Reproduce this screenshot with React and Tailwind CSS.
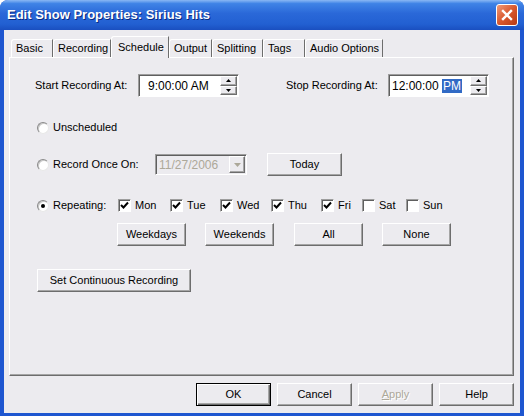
import React from "react";

const raised =
  "border border-t-white border-l-white border-r-[#6d6d6d] border-b-[#6d6d6d] shadow-[inset_-1px_-1px_0_#a5a5a5]";
const sunken =
  "border border-t-[#9d9d9d] border-l-[#9d9d9d] border-r-white border-b-white shadow-[inset_1px_1px_0_#5f5f5f]";

function Btn({ children, className = "", def, disabled }) {
  return (
    <div
      className={`flex items-center justify-center h-[23px] bg-[#ecebef] ${
        def
          ? "border border-black shadow-[inset_1px_1px_0_#fff,inset_-1px_-1px_0_#6d6d6d,inset_-2px_-2px_0_#a5a5a5]"
          : raised
      } ${disabled ? "text-[#aca899] [text-shadow:1px_1px_0_#fff]" : "text-black"} ${className}`}
    >
      {children}
    </div>
  );
}

function Arrow({ up, color = "#000" }) {
  return (
    <svg width="5" height="3" viewBox="0 0 5 3">
      <path d={up ? "M2.5 0L5 3H0z" : "M0 0H5L2.5 3z"} fill={color} />
    </svg>
  );
}

function TimeBox({ pad, children }) {
  return (
    <div className={`flex items-center h-[23px] w-[101px] bg-white ${sunken}`}>
      <div className={`${pad} text-[12px] leading-none`}>{children}</div>
      <div className="ml-auto flex flex-col h-full py-[1px] pr-[1px]">
        <div className={`flex-1 w-[17px] flex items-center justify-center bg-[#ecebef] ${raised}`}>
          <Arrow up />
        </div>
        <div className={`flex-1 w-[17px] flex items-center justify-center bg-[#ecebef] ${raised}`}>
          <Arrow />
        </div>
      </div>
    </div>
  );
}

function Radio({ checked }) {
  return (
    <div className="w-[12px] h-[12px] rounded-full bg-white border border-t-[#8a8a8a] border-l-[#8a8a8a] border-r-[#e8e8e8] border-b-[#e8e8e8] shadow-[inset_1px_1px_0_#c8c8c8] flex items-center justify-center shrink-0">
      {checked && <div className="w-[4px] h-[4px] rounded-full bg-black" />}
    </div>
  );
}

function Check({ label, checked, w }) {
  return (
    <div className={`flex items-center gap-[4px] ${w}`}>
      <div className={`w-[13px] h-[13px] bg-white flex items-center justify-center shrink-0 ${sunken}`}>
        {checked && (
          <svg width="9" height="9" viewBox="0 0 9 9">
            <path d="M1 4L3.5 6.5L8 1.5" stroke="#000" strokeWidth="2" fill="none" />
          </svg>
        )}
      </div>
      <span>{label}</span>
    </div>
  );
}

const tabs = [
  ["Basic", "w-[42px]"],
  ["Recording", "w-[58px]"],
  ["Schedule", "w-[58px]", true],
  ["Output", "w-[43px]"],
  ["Splitting", "w-[51px]"],
  ["Tags", "w-[42px]"],
  ["Audio Options", "w-[78px]"],
];

export default function App() {
  return (
    <div className="w-[524px] h-[416px] flex flex-col bg-[#1e56d0] rounded-t-[8px] overflow-hidden font-['Liberation_Sans',Arial,sans-serif] text-[11px] text-black">
      {/* Title bar */}
      <div className="h-[30px] shrink-0 flex items-center pl-[7px] pr-[6px] bg-[linear-gradient(#8ab8f4_0%,#3f83e6_12%,#2a68d8_45%,#2260d2_80%,#1a4fc0_100%)]">
        <span className="text-white font-bold text-[13px] [text-shadow:1px_1px_0_#0a2a80]">
          Edit Show Properties: Sirius Hits
        </span>
        <div className="ml-auto w-[22px] h-[22px] rounded-[3px] border border-white bg-[linear-gradient(135deg,#f09a78,#d9582e_50%,#b83a14)] flex items-center justify-center">
          <svg width="12" height="12" viewBox="0 0 12 12">
            <path d="M2 2L10 10M10 2L2 10" stroke="#fff" strokeWidth="2.4" strokeLinecap="square" />
          </svg>
        </div>
      </div>

      {/* Client */}
      <div className="flex-1 mx-[4px] mb-[3px] bg-[#ecebef] flex flex-col">
        <div className="flex items-end h-[21px] mt-[6px] ml-[7px]">
          {tabs.map(([t, w, sel]) =>
            sel ? (
              <div
                key={t}
                className={`${w} h-[22px] -mb-[1px] relative z-10 bg-[#ecebef] border-t border-l border-t-white border-l-white border-r border-r-[#6d6d6d] rounded-tl-[3px] pl-[6px] flex items-center`}
              >
                {t}
              </div>
            ) : (
              <div
                key={t}
                className={`${w} h-[18px] bg-[#ecebef] border-t border-l border-t-white border-l-white border-r border-r-[#6d6d6d] rounded-tl-[3px] pl-[4px] flex items-center`}
              >
                {t}
              </div>
            )
          )}
        </div>

        {/* Panel */}
        <div className="ml-[5px] w-[505px] h-[319px] border border-t-white border-l-white border-r-[#6d6d6d] border-b-[#6d6d6d] shadow-[inset_-1px_-1px_0_#a5a5a5] flex flex-col pl-[25px]">
          <div className="flex items-center h-[23px] mt-[16px]">
            <span className="w-[103px]">Start Recording At:</span>
            <TimeBox pad="pl-[9px]">9:00:00 AM</TimeBox>
            <span className="w-[102px] ml-[47px]">Stop Recording At:</span>
            <TimeBox pad="pl-[3px]">
              12:00:00 <span className="bg-[#316ac5] text-white px-[1px]">PM</span>
            </TimeBox>
          </div>

          <div className="flex items-center h-[13px] mt-[24px] ml-[2px] gap-[4px]">
            <Radio />
            <span>Unscheduled</span>
          </div>

          <div className="flex items-center h-[23px] mt-[19px] ml-[2px]">
            <Radio />
            <span className="ml-[4px] w-[102px]">Record Once On:</span>
            <div className={`flex items-center w-[92px] h-[21px] bg-[#ecebef] ${sunken}`}>
              <span className="pl-[3px] text-[12px] text-[#aca899]">11/27/2006</span>
              <div className={`ml-auto mr-[1px] w-[16px] h-[17px] flex items-center justify-center ${raised}`}>
                <svg width="7" height="4" viewBox="0 0 7 4">
                  <path d="M0 0H7L3.5 4z" fill="#aca899" />
                </svg>
              </div>
            </div>
            <Btn className="w-[75px] ml-[20px] h-[22px]">Today</Btn>
          </div>

          <div className="flex items-center h-[13px] mt-[23px] ml-[2px]">
            <Radio checked />
            <span className="ml-[4px] w-[65px]">Repeating:</span>
            <Check label="Mon" checked w="w-[52px]" />
            <Check label="Tue" checked w="w-[50px]" />
            <Check label="Wed" checked w="w-[51px]" />
            <Check label="Thu" checked w="w-[50px]" />
            <Check label="Fri" checked w="w-[41px]" />
            <Check label="Sat" w="w-[44px]" />
            <Check label="Sun" w="w-[50px]" />
          </div>

          <div className="flex items-center mt-[11px] ml-[82px]">
            <Btn className="w-[69px]">Weekdays</Btn>
            <Btn className="w-[69px] ml-[19px]">Weekends</Btn>
            <Btn className="w-[69px] ml-[20px]">All</Btn>
            <Btn className="w-[69px] ml-[19px]">None</Btn>
          </div>

          <div className="flex mt-[23px] ml-[2px]">
            <Btn className="w-[154px]">Set Continuous Recording</Btn>
          </div>
        </div>

        {/* Bottom buttons */}
        <div className="flex justify-end gap-[6px] mt-[7px] mr-[6px]">
          <Btn def className="w-[75px]">OK</Btn>
          <Btn className="w-[75px]">Cancel</Btn>
          <Btn disabled className="w-[75px]">
            <span>
              <span className="underline">A</span>pply
            </span>
          </Btn>
          <Btn className="w-[75px]">Help</Btn>
        </div>
      </div>
    </div>
  );
}
